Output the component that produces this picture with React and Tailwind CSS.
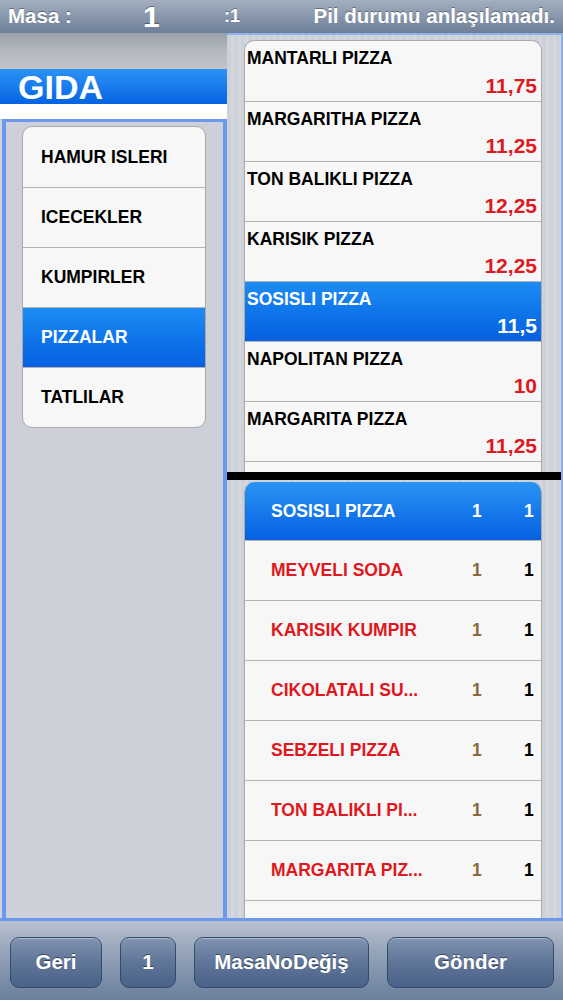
import React from 'react';

const font = { fontFamily: '"Liberation Sans", Arial, sans-serif' };

const categories = [
    { name: "HAMUR ISLERI" },
    { name: "ICECEKLER" },
    { name: "KUMPIRLER" },
    { name: "PIZZALAR", active: true },
    { name: "TATLILAR" },
];

const products = [
    { name: "MANTARLI PIZZA", price: "11,75" },
    { name: "MARGARITHA PIZZA", price: "11,25" },
    { name: "TON BALIKLI PIZZA", price: "12,25" },
    { name: "KARISIK PIZZA", price: "12,25" },
    { name: "SOSISLI PIZZA", price: "11,5", active: true },
    { name: "NAPOLITAN PIZZA", price: "10" },
    { name: "MARGARITA PIZZA", price: "11,25" },
    { name: "SEBZELI PIZZA", price: "11" },
];

const orders = [
    { name: "MEYVELI SODA" },
    { name: "KARISIK KUMPIR" },
    { name: "CIKOLATALI SU..." },
    { name: "SEBZELI PIZZA" },
    { name: "TON BALIKLI PI..." },
    { name: "MARGARITA PIZ..." },
    { name: "" },
];

function ToolButton({ label, width }) {
    return (
        <button
            className={`${width} h-[51px] rounded-[9px] border border-[#34496b] bg-linear-to-b from-[#8194b1] via-[#5f7598] to-[#4a6189] text-white text-[20.5px] font-bold shadow-[inset_0_1px_0_rgba(255,255,255,0.35)] [text-shadow:0_-1px_0_rgba(0,0,0,0.45)]`}
        >
            {label}
        </button>
    );
}

export default function App() {
    return (
        <div className="w-[563px] h-[1000px] flex flex-col overflow-hidden bg-[#cfd3da]" style={font}>
            {/* Status header */}
            <div className="h-[33px] flex items-center px-2 bg-linear-to-b from-[#a3afc0] to-[#6d7e97] text-white font-bold [text-shadow:0_-1px_0_rgba(0,0,0,0.35)]">
                <span className="text-[20.5px] w-[135px]">Masa :</span>
                <span className="text-[30px] leading-none w-[81px]">1</span>
                <span className="text-[18px]">:1</span>
                <span className="ml-auto text-[20.5px]">Pil durumu anlaşılamadı.</span>
            </div>

            {/* Main area */}
            <div className="h-[888px] flex border-b-[3px] border-[#6b98ee]">
                {/* Left column */}
                <div className="w-[227px] flex flex-col">
                    <div className="h-[36px] bg-linear-to-b from-[#9aa1aa] via-[#b5b9bf] to-[#c2c5ca]" />
                    <div className="h-[35px] flex items-center pl-[18px] bg-linear-to-b from-[#2b93f5] to-[#0763e2]">
                        <span className="text-white text-[34px] font-bold leading-none">GIDA</span>
                    </div>
                    <div className="h-[15px] bg-white" />
                    <div className="flex-1 ml-[2px] border-x-4 border-t-[3px] border-[#6b98ee] bg-[#cdd0d8] pt-[4px] pl-[16px]">
                        <div className="w-[184px] rounded-[10px] border border-[#a9a9a9] bg-[#f7f7f7] overflow-hidden">
                            {categories.map((c, i) => (
                                <div
                                    key={c.name}
                                    className={`h-[60px] flex items-center pl-[18px] text-[17.5px] font-bold ${i > 0 ? 'border-t border-[#b3b3b3]' : ''} ${c.active ? 'bg-linear-to-b from-[#1d8cf3] to-[#075fe1] text-white' : 'text-black'}`}
                                >
                                    {c.name}
                                </div>
                            ))}
                        </div>
                    </div>
                </div>

                {/* Right column */}
                <div className="flex-1 flex flex-col border-t-2 border-r-2 border-[#8fb0ec] bg-[repeating-linear-gradient(90deg,#cdd1d8_0px,#cdd1d8_4px,#d4d8de_4px,#d4d8de_7px)]">
                    <div className="mt-[5px] ml-[17px] w-[298px] h-[432px] overflow-hidden rounded-t-[10px] border-x border-t border-[#a9a9a9] bg-[#f7f7f7]">
                        {products.map((p, i) => (
                            <div
                                key={p.name}
                                className={`h-[60px] flex flex-col justify-between px-[2px] pt-[7px] pb-[3px] font-bold ${i > 0 ? 'border-t border-[#b3b3b3]' : ''} ${p.active ? 'bg-linear-to-b from-[#1d8cf3] to-[#075fe1] text-white' : 'text-black'}`}
                            >
                                <span className="text-[17.5px] leading-[20px]">{p.name}</span>
                                <span className={`self-end pr-[2px] text-[21px] leading-[24px] ${p.active ? 'text-white' : 'text-[#dc1a1f]'}`}>
                                    {p.price}
                                </span>
                            </div>
                        ))}
                    </div>

                    <div className="h-[8px] bg-black" />

                    <div className="mt-[2px] ml-[17px] w-[298px] flex-1 overflow-hidden rounded-t-[10px] border-x border-[#a9a9a9] bg-[#f7f7f7]">
                        <div className="h-[58px] flex items-center pl-[26px] bg-linear-to-b from-[#2a93f5] to-[#0660e1] text-white text-[17.5px] font-bold">
                            <span className="w-[201px]">SOSISLI PIZZA</span>
                            <span className="w-[52px]">1</span>
                            <span className="w-[12px]">1</span>
                        </div>
                        {orders.map((o, i) => (
                            <div
                                key={i}
                                className="h-[60px] flex items-center pl-[26px] border-t border-[#b3b3b3] text-[17.5px] font-bold"
                            >
                                <span className="w-[201px] text-[#e0171d]">{o.name}</span>
                                {o.name && <span className="w-[52px] text-[#8a6a3c]">1</span>}
                                {o.name && <span className="w-[12px] text-black">1</span>}
                            </div>
                        ))}
                    </div>
                </div>
            </div>

            {/* Bottom toolbar */}
            <div className="flex-1 flex items-start gap-[18px] pt-[16px] pl-[10px] bg-linear-to-b from-[#b7c1cf] via-[#8d9db3] to-[#6b7f9c]">
                <ToolButton label="Geri" width="w-[92px]" />
                <ToolButton label="1" width="w-[56px]" />
                <ToolButton label="MasaNoDeğiş" width="w-[175px]" />
                <ToolButton label="Gönder" width="w-[167px]" />
            </div>
        </div>
    );
}
